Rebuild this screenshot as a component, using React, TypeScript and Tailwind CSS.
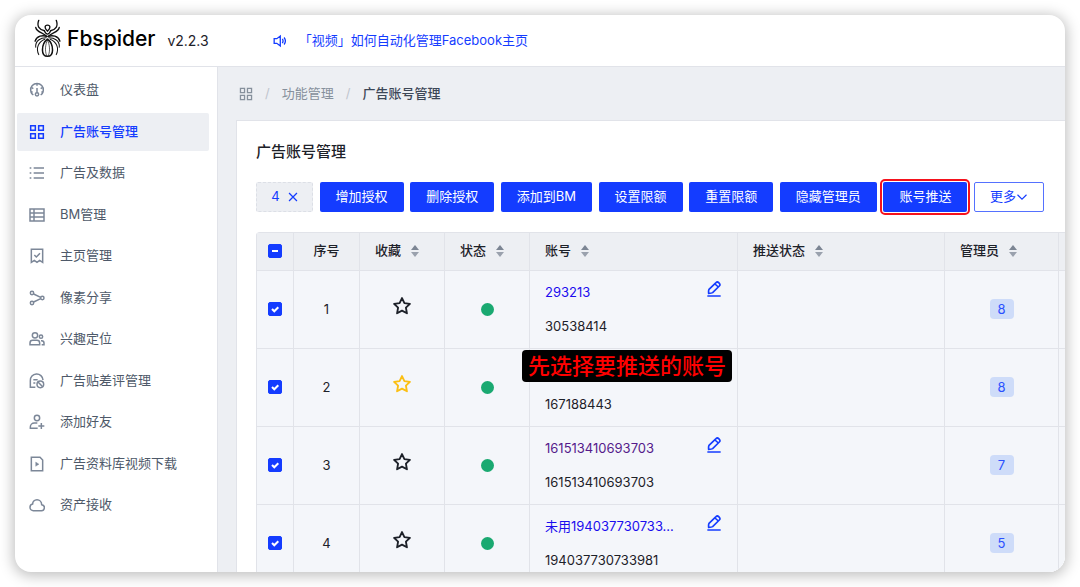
import { ReactNode } from "react";

interface IconProps {
  className?: string;
  children?: ReactNode;
}

function Icon({ className = "size-4", children }: IconProps) {
  return (
    <svg viewBox="0 0 48 48" fill="none" stroke="currentColor" strokeWidth="4.5" className={`shrink-0 ${className}`} aria-hidden="true">
      {children}
    </svg>
  );
}

function SpiderLegs() {
  return (
    <>
      <path d="M14 4C7 22 16 32 31 35" />
      <path d="M5 25C7 40 27 40 38 52" />
      <path d="M3 66C8 50 26 47 38 52" />
      <path d="M5 84C3 64 20 56 36 56" strokeWidth="3" />
      <path d="M14 106C5 88 12 68 32 60" strokeWidth="3" />
    </>
  );
}

function SpiderLogo() {
  return (
    <svg viewBox="0 0 80 116" fill="none" stroke="#111" strokeWidth="4" strokeLinecap="round" className="h-[39px] w-[27px] shrink-0" aria-hidden="true">
      <SpiderLegs />
      <g transform="matrix(-1 0 0 1 80 0)">
        <SpiderLegs />
      </g>
      <path d="M40 36C30 28 31 18 40 18S50 28 40 36z" />
      <path d="M31 36C34 43 37 45 40 45S46 43 49 36" />
      <path d="M40 60C29 68 25 80 25 92C25 105 32 111 40 111S55 105 55 92C55 80 51 68 40 60z" strokeWidth="4.5" />
      <path d="M40 62C33 78 32 94 37 108M40 62C47 78 48 94 43 108" strokeWidth="2" />
    </svg>
  );
}

const appsPath = "M5 5h14v14H5zM29 5h14v14H29zM5 29h14v14H5zM29 29h14v14H29z";

const menu = [
  {
    label: "仪表盘",
    icon: (
      <>
        <path d="M13 39A19 19 0 1 1 35 39" />
        <circle cx="24" cy="37" r="5" />
        <path d="M24 32V18M24 5v6M8 17l5 3M40 17l-5 3M5 30h6M43 30h-6" />
      </>
    ),
  },
  { label: "广告账号管理", active: true, icon: <path d={appsPath} /> },
  { label: "广告及数据", icon: <path d="M14 9h31M14 24h31M14 39h31M2 9h5M2 24h5M2 39h5" /> },
  { label: "BM管理", icon: <path d="M3 6h42v36H3zM3 18h42M3 30h42M15 6v36" /> },
  {
    label: "主页管理",
    icon: (
      <>
        <path d="M7 4h34v39l-9-6-8 6-8-6-9 6z" />
        <path d="m16 21 6 6 11-11" />
      </>
    ),
  },
  {
    label: "像素分享",
    icon: (
      <>
        <circle cx="9" cy="9" r="5" />
        <circle cx="9" cy="39" r="5" />
        <circle cx="40" cy="24" r="5" />
        <path d="m14 12 21 10M14 36l21-10" />
      </>
    ),
  },
  {
    label: "兴趣定位",
    icon: (
      <>
        <circle cx="18" cy="13" r="8" />
        <circle cx="36" cy="17" r="5" />
        <path d="M3 41v-5a8 8 0 0 1 8-8h13a8 8 0 0 1 8 8v5zM36 29h2a7 7 0 0 1 7 7v5h-7" />
      </>
    ),
  },
  {
    label: "广告贴差评管理",
    icon: (
      <>
        <path d="M19 43H4V23a19 19 0 0 1 38-2M13 20h13M13 30h6" />
        <circle cx="34" cy="34" r="10" />
        <path d="m27 27 14 14" />
      </>
    ),
  },
  {
    label: "添加好友",
    icon: (
      <>
        <circle cx="24" cy="12" r="8" />
        <path d="M26 43H4v-4a12 12 0 0 1 12-12h9M37 27v18M28 36h18" />
      </>
    ),
  },
  {
    label: "广告资料库视频下载",
    icon: (
      <>
        <path d="M7 4h26l8 8v32H7z" />
        <path d="m20 18 10 6.500-10 6.500z" fill="currentColor" strokeWidth="1" />
      </>
    ),
  },
  { label: "资产接收", icon: <path d="M3 31c0 6 5 10 10 10h23a9 9 0 0 0 2-18C38 15 32 8 24 8S11 14 11 21c-5 1-8 5-8 10z" /> },
];

const actions = ["增加授权", "删除授权", "添加到BM", "设置限额", "重置限额", "隐藏管理员"];

const accounts = [
  { name: "293213", id: "30538414", admins: 8 },
  { name: "", id: "167188443", admins: 8, starred: true },
  { name: "161513410693703", id: "161513410693703", admins: 7, visited: true },
  { name: "未用194037730733...", id: "194037730733981", admins: 5 },
];

function Sorter() {
  return (
    <svg viewBox="0 0 8 12" className="h-3 w-2 shrink-0" aria-hidden="true">
      <path d="M4 0 8 5H0z" fill="#7c8593" />
      <path d="M4 12 0 7h8z" fill="#9aa1ad" />
    </svg>
  );
}

function SortHeader({ label }: { label: string }) {
  return (
    <th className="border-b border-l border-[#e1e3e9] px-[15px] pb-0.5 text-left font-medium">
      <div className="flex items-center gap-2.5">
        {label}
        <Sorter />
      </div>
    </th>
  );
}

function Checkbox({ label, partial }: { label: string; partial?: boolean }) {
  return (
    <label className="grid place-items-center pb-0.5 *:col-start-1 *:row-start-1">
      <input type="checkbox" defaultChecked aria-label={label} className="size-3.5 appearance-none rounded-xs border border-gray-300 bg-white checked:border-[#143cff] checked:bg-[#143cff]" />
      <svg viewBox="0 0 14 14" fill="none" stroke="#fff" strokeWidth="2" className="pointer-events-none size-3.5" aria-hidden="true">
        <path d={partial ? "M4 7h6" : "m4 7 2.300 2.300 4-4"} />
      </svg>
    </label>
  );
}

export default function App() {
  return (
    <div className="h-screen bg-white p-[15px] font-['Inter','Noto_Sans_CJK_SC',sans-serif] text-[13px] text-[#1d2129]">
      <div className="flex h-full flex-col overflow-hidden rounded-2xl bg-white shadow-[0_2px_14px_2px_rgba(0,0,0,0.25)]">
        <header className="flex h-[52px] shrink-0 items-center border-b border-[#e1e3e9] pl-[19px]">
          <div className="flex items-center gap-1.5 pb-1 text-black">
            <SpiderLogo />
            <span className="text-[21px] leading-7 font-medium">Fbspider</span>
          </div>
          <span className="ml-3 text-sm">v2.2.3</span>
          <a href="#video" className="ml-16 flex items-center gap-3 text-[#143cff]">
            <Icon className="size-3.5">
              <path d="M4 16h9l12-9v34l-12-9H4zM32 17q5 7 0 14M38 12q9 12 0 24" />
            </Icon>
            「视频」如何自动化管理Facebook主页
          </a>
        </header>

        <div className="flex min-h-0 flex-1">
          <aside className="w-[203px] shrink-0 border-r border-[#e1e3e9] pt-1 pr-2 pl-0.5">
            <nav className="flex h-[453px] flex-col justify-between">
              {menu.map((item) => (
                <a
                  key={item.label}
                  href="#menu"
                  className={`flex h-[38px] items-center gap-[15px] rounded-xs pl-3 ${item.active ? "bg-[#edeff3] font-medium text-[#143cff]" : "text-[#4e5969]"}`}
                >
                  <Icon className={item.active ? "size-4" : "size-4 text-[#7c8798]"}>{item.icon}</Icon>
                  {item.label}
                </a>
              ))}
            </nav>
          </aside>

          <main className="min-w-0 flex-1 overflow-hidden bg-[#edeff3] pl-[18px]">
            <nav className="flex h-[53px] items-center pl-[3px] text-[#86909c]" aria-label="breadcrumb">
              <Icon className="size-3.5">
                <path d={appsPath} />
              </Icon>
              <span className="mx-3 text-[#c0c5ce]">/</span>
              <a href="#features">功能管理</a>
              <span className="mx-3 text-[#c0c5ce]">/</span>
              <span className="font-medium text-[#3d4757]">广告账号管理</span>
            </nav>

            <section className="h-full border-t border-l border-[#e1e3e9] bg-white pt-[19px] pl-[19px]">
              <h1 className="text-[15px] leading-6 font-medium">广告账号管理</h1>

              <div className="mt-[18px] mr-[21px] flex items-center justify-between whitespace-nowrap">
                <button type="button" className="flex h-[30px] w-[57px] items-center justify-center gap-2 rounded-xs border border-dashed border-[#dcdfe6] bg-[#edeff3] text-[#143cff]">
                  4
                  <Icon className="size-2.5">
                    <path d="m5 5 38 38M43 5 5 43" strokeWidth="6" />
                  </Icon>
                </button>
                {actions.map((label) => (
                  <button key={label} type="button" className="h-[30px] rounded-xs bg-[#143cff] px-4 text-white">
                    {label}
                  </button>
                ))}
                <button type="button" className="h-[30px] rounded-xs bg-[#143cff] px-4 text-white outline-2 outline-offset-1 outline-[#f5121d]">
                  账号推送
                </button>
                <button type="button" className="flex h-[30px] w-[70px] items-center justify-center rounded-xs border border-[#5571ff] bg-white text-[#143cff]">
                  更多
                  <Icon className="size-3">
                    <path d="M6 15 24 33 42 15" />
                  </Icon>
                </button>
              </div>

              <div className="mt-5 overflow-hidden rounded-tl-sm">
                <table className="w-[1002px] table-fixed border-separate border-spacing-0 border-t border-[#e1e3e9]">
                  <colgroup>
                    <col className="w-[37px]" />
                    <col className="w-[66px]" />
                    <col className="w-[85px]" />
                    <col className="w-[85px]" />
                    <col className="w-[208px]" />
                    <col className="w-[207px]" />
                    <col className="w-[114px]" />
                    <col />
                  </colgroup>
                  <thead className="bg-[#edeff3]">
                    <tr className="h-[38px]">
                      <th className="border-b border-l border-[#e1e3e9]">
                        <Checkbox label="全选" partial />
                      </th>
                      <th className="border-b border-l border-[#e1e3e9] pb-0.5 font-medium">序号</th>
                      <SortHeader label="收藏" />
                      <SortHeader label="状态" />
                      <SortHeader label="账号" />
                      <SortHeader label="推送状态" />
                      <SortHeader label="管理员" />
                      <th className="border-b border-l border-[#e1e3e9]" />
                    </tr>
                  </thead>
                  <tbody className="bg-[#f4f6fa] text-center *:*:border-b *:*:border-l *:*:border-[#e1e3e9]">
                    {accounts.map((account, index) => (
                      <tr key={account.id} className="h-[78px]">
                        <td>
                          <Checkbox label={`选择 ${account.id}`} />
                        </td>
                        <td>{index + 1}</td>
                        <td>
                          <button type="button" aria-label="收藏" className={`mb-2 block w-full ${account.starred ? "text-[#fbbf14]" : "text-[#1d2129]"}`}>
                            <Icon className="mx-auto size-5">
                              <path d="m24 5 5.800 12 13.200 1.800-9.600 9.200L35.800 41.500 24 35 12.200 41.500l2.400-13.500L5 18.800l13.200-1.800z" strokeLinejoin="round" />
                            </Icon>
                          </button>
                        </td>
                        <td>
                          <span className="mx-auto block size-[13px] rounded-full bg-[#1aa971]" />
                        </td>
                        <td className="relative px-[15px] text-left">
                          <div className="flex h-[34px] items-center justify-between">
                            {account.name && (
                              <>
                                <a href="#account" className={account.visited ? "text-[#551a8b]" : "text-[#1a0dee]"}>
                                  {account.name}
                                </a>
                                <button type="button" aria-label="编辑" className="mb-2 text-[#143cff]">
                                  <Icon className="size-4">
                                    <path d="M4 45h40M9 25 30 5Q34 1 38 5L40 7Q44 11 40 15L20 35Q17 37 8 37Q7 29 9 25zM27 9l10 9" strokeWidth="5" />
                                  </Icon>
                                </button>
                              </>
                            )}
                          </div>
                          <div className="flex h-[34px] items-center">{account.id}</div>
                          {index === 1 && (
                            <strong className="absolute top-px -left-2 rounded bg-black px-1.5 text-[22px] leading-8 font-medium whitespace-nowrap text-[#ff0000]">
                              先选择要推送的账号
                            </strong>
                          )}
                        </td>
                        <td />
                        <td>
                          <span className="inline-block w-6 rounded bg-[#cedcf9] leading-5 text-[#2b50ff]">{account.admins}</span>
                        </td>
                        <td />
                      </tr>
                    ))}
                  </tbody>
                </table>
              </div>
            </section>
          </main>
        </div>
      </div>
    </div>
  );
}
